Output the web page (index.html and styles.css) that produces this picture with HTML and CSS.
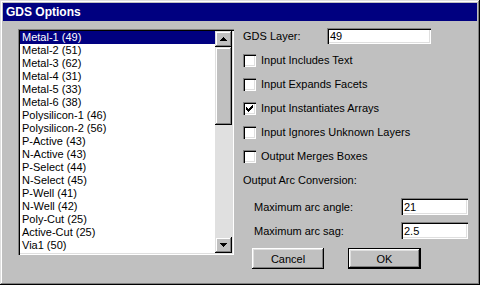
FILE: index.html
```html
<!DOCTYPE html>
<html>
<head>
<meta charset="utf-8">
<link rel="stylesheet" href="styles.css">
</head>
<body>
<div class="window">
  <div class="titlebar">GDS Options</div>
  <div class="main">
    <div class="listbox">
      <ul class="items">
        <li class="sel">Metal-1 (49)</li>
        <li>Metal-2 (51)</li>
        <li>Metal-3 (62)</li>
        <li>Metal-4 (31)</li>
        <li>Metal-5 (33)</li>
        <li>Metal-6 (38)</li>
        <li>Polysilicon-1 (46)</li>
        <li>Polysilicon-2 (56)</li>
        <li>P-Active (43)</li>
        <li>N-Active (43)</li>
        <li>P-Select (44)</li>
        <li>N-Select (45)</li>
        <li>P-Well (41)</li>
        <li>N-Well (42)</li>
        <li>Poly-Cut (25)</li>
        <li>Active-Cut (25)</li>
        <li>Via1 (50)</li>
      </ul>
      <div class="scrollbar">
        <div class="sbtn"><svg width="7" height="4" viewBox="0 0 7 4" shape-rendering="crispEdges"><rect x="3" y="0" width="1" height="1"/><rect x="2" y="1" width="3" height="1"/><rect x="1" y="2" width="5" height="1"/><rect x="0" y="3" width="7" height="1"/></svg></div>
        <div class="thumb"></div>
        <div class="track"></div>
        <div class="sbtn"><svg width="7" height="4" viewBox="0 0 7 4" shape-rendering="crispEdges"><rect x="0" y="0" width="7" height="1"/><rect x="1" y="1" width="5" height="1"/><rect x="2" y="2" width="3" height="1"/><rect x="3" y="3" width="1" height="1"/></svg></div>
      </div>
    </div>
    <div class="panel">
      <div class="layer-row">
        <span class="layer-label">GDS Layer:</span>
        <div class="field layer-field">49</div>
      </div>
      <div class="checks">
        <div class="check-row"><span class="box"></span><span>Input Includes Text</span></div>
        <div class="check-row"><span class="box"></span><span>Input Expands Facets</span></div>
        <div class="check-row"><span class="box"><svg width="7" height="7" viewBox="0 0 7 7" shape-rendering="crispEdges"><rect x="6" y="0" width="1" height="1"/><rect x="5" y="1" width="2" height="1"/><rect x="0" y="2" width="1" height="1"/><rect x="4" y="2" width="3" height="1"/><rect x="0" y="3" width="2" height="1"/><rect x="3" y="3" width="3" height="1"/><rect x="0" y="4" width="5" height="1"/><rect x="1" y="5" width="3" height="1"/><rect x="2" y="6" width="1" height="1"/></svg></span><span>Input Instantiates Arrays</span></div>
        <div class="check-row"><span class="box"></span><span>Input Ignores Unknown Layers</span></div>
        <div class="check-row"><span class="box"></span><span>Output Merges Boxes</span></div>
        <div class="check-row">Output Arc Conversion:</div>
      </div>
      <div class="arc-row first">
        <span class="arc-label">Maximum arc angle:</span>
        <div class="field arc-field">21</div>
      </div>
      <div class="arc-row">
        <span class="arc-label">Maximum arc sag:</span>
        <div class="field arc-field">2.5</div>
      </div>
      <div class="buttons">
        <div class="btn cancel">Cancel</div>
        <div class="btn ok"><div class="btn-inner">OK</div></div>
      </div>
    </div>
  </div>
</div>
</body>
</html>
```
FILE: styles.css
```css
html, body {
  margin: 0;
  padding: 0;
  background: #c0c0c0;
}
body {
  font-family: "Liberation Sans", Arial, sans-serif;
  font-size: 11px;
  color: #000;
}
.window {
  width: 480px;
  height: 285px;
  box-sizing: border-box;
  padding: 3px;
  background: #c0c0c0;
  box-shadow: inset -1px -1px #000, inset 1px 1px #dfdfdf, inset -2px -2px #808080, inset 2px 2px #fff;
  overflow: hidden;
}
.titlebar {
  height: 18px;
  line-height: 18px;
  background: #000080;
  color: #fff;
  font-weight: bold;
  font-size: 12px;
  padding-left: 3px;
}
.main {
  display: flex;
  padding: 8px 0 0 15px;
}
.listbox {
  width: 216px;
  height: 226px;
  box-sizing: border-box;
  padding: 2px;
  background: #fff;
  box-shadow: inset 1px 1px #808080, inset 2px 2px #000, inset -1px -1px #fff, inset -2px -2px #dfdfdf;
  display: flex;
  flex-shrink: 0;
}
.items {
  list-style: none;
  margin: 0;
  padding: 0;
  width: 195px;
  overflow: hidden;
}
.items li {
  height: 13px;
  line-height: 13px;
  padding-left: 2px;
  white-space: nowrap;
}
.items li.sel {
  background: #000080;
  color: #fff;
}
.scrollbar {
  width: 17px;
  display: flex;
  flex-direction: column;
  background: #e0e0e0;
}
.sbtn, .thumb {
  box-sizing: border-box;
  background: #c0c0c0;
  box-shadow: inset -1px -1px #000, inset 1px 1px #dfdfdf, inset -2px -2px #808080, inset 2px 2px #fff;
}
.sbtn {
  height: 16px;
  display: flex;
  align-items: center;
  justify-content: center;
}
.sbtn svg {
  display: block;
}
.thumb {
  height: 78px;
}
.track {
  flex: 1;
}
.panel {
  margin-left: 9px;
  margin-top: -1px;
  width: 234px;
  display: flex;
  flex-direction: column;
}
.field {
  box-sizing: border-box;
  background: #fff;
  box-shadow: inset 1px 1px #808080, inset 2px 2px #000, inset -1px -1px #fff, inset -2px -2px #dfdfdf;
  padding-left: 3px;
  display: flex;
  align-items: center;
}
.layer-row {
  display: flex;
  align-items: center;
  height: 16px;
}
.layer-label {
  width: 84px;
}
.layer-field {
  width: 104px;
  height: 16px;
}
.checks {
  margin-top: 4px;
  display: flex;
  flex-direction: column;
}
.check-row {
  height: 24px;
  display: flex;
  align-items: center;
}
.box {
  width: 13px;
  height: 13px;
  box-sizing: border-box;
  background: #fff;
  box-shadow: inset 1px 1px #808080, inset 2px 2px #000, inset -1px -1px #fff, inset -2px -2px #dfdfdf;
  margin-right: 5px;
  display: flex;
  align-items: center;
  justify-content: center;
}
.box svg {
  display: block;
}
.arc-row {
  display: flex;
  align-items: center;
  height: 17px;
  margin-top: 7px;
}
.arc-row.first {
  margin-top: 6px;
}
.arc-label {
  width: 147px;
  padding-left: 11px;
}
.arc-field {
  width: 67px;
  height: 17px;
}
.buttons {
  display: flex;
  margin-top: 9px;
  padding-left: 9px;
}
.btn {
  height: 21px;
  box-sizing: border-box;
  background: #c0c0c0;
  display: flex;
  align-items: center;
  justify-content: center;
}
.cancel {
  width: 72px;
  box-shadow: inset -1px -1px #000, inset 1px 1px #fff, inset -2px -2px #808080, inset 2px 2px #dfdfdf;
}
.ok {
  width: 73px;
  margin-left: 24px;
  border: 1px solid #000;
}
.btn-inner {
  width: 100%;
  height: 100%;
  display: flex;
  align-items: center;
  justify-content: center;
  box-shadow: inset -1px -1px #000, inset 1px 1px #fff, inset -2px -2px #808080, inset 2px 2px #dfdfdf;
}
```
